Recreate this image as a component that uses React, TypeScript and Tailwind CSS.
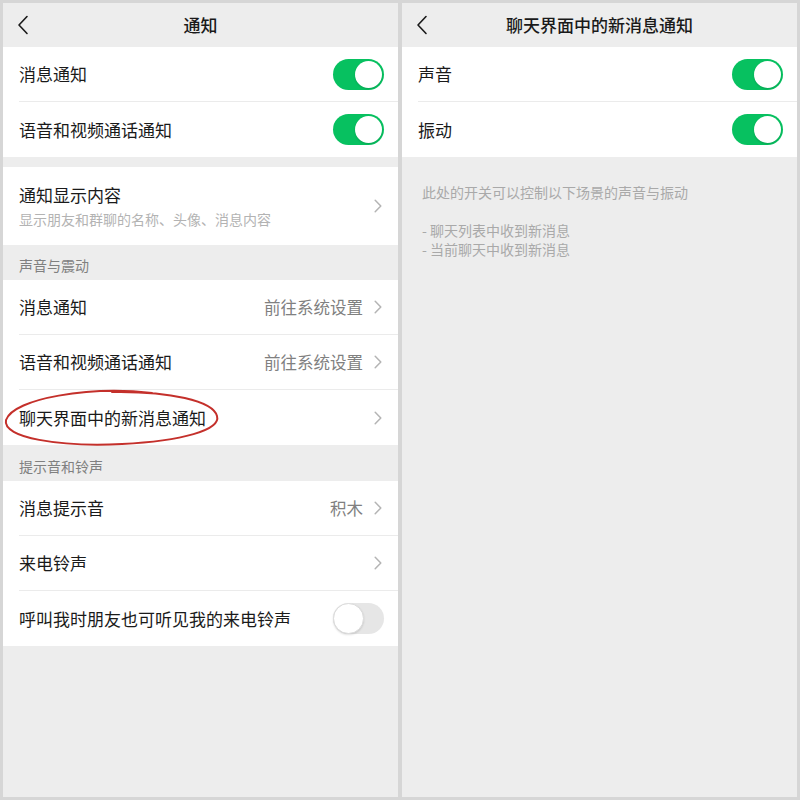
import React from "react";

const font = {
  fontFamily: '"Noto Sans CJK SC", "Noto Sans", "Liberation Sans", sans-serif',
};

const Chevron = () => (
  <svg width="8" height="14" viewBox="0 0 8 14" className="shrink-0">
    <path d="M1.2 1.2L6.8 7l-5.6 5.8" fill="none" stroke="#b4b4b4" strokeWidth="1.5" strokeLinecap="round" strokeLinejoin="round" />
  </svg>
);

const Toggle = ({ on = true }) =>
  on ? (
    <div className="w-[51px] h-[31px] rounded-full bg-[#07c160] flex items-center justify-end p-[2px] shrink-0">
      <div className="w-[27px] h-[27px] rounded-full bg-white shadow-[0_1px_2px_rgba(0,0,0,0.15)]" />
    </div>
  ) : (
    <div className="w-[51px] h-[31px] rounded-full bg-[#e6e6e6] flex items-center justify-start shrink-0">
      <div className="w-[31px] h-[31px] rounded-full bg-white border border-[#dcdcdc] shadow-[0_1px_2px_rgba(0,0,0,0.12)]" />
    </div>
  );

const Header = ({ title = "" }) => (
  <div className="h-[44px] bg-[#ededed] relative flex items-center justify-center shrink-0">
    <svg width="12" height="20" viewBox="0 0 12 20" className="absolute left-[14px] top-[12px]">
      <path d="M10 1.5L2 10l8 8.5" fill="none" stroke="#1a1a1a" strokeWidth="1.6" strokeLinecap="round" strokeLinejoin="round" />
    </svg>
    <span className="text-[17px] font-medium text-[#1a1a1a]">{title}</span>
  </div>
);

const Row = ({
  label = "",
  value = "",
  toggle,
  chevron = false,
  last = false,
}: {
  label?: string;
  value?: string;
  toggle?: boolean;
  chevron?: boolean;
  last?: boolean;
}) => (
  <div className="h-[55px] bg-white pl-4 flex">
    <div
      className={
        (toggle !== undefined ? "pr-[14px] " : "pr-4 ") +
        (last
          ? "flex-1 flex items-center"
          : "flex-1 flex items-center border-b border-[#ebebeb]")
      }
    >
      <span className="text-[17px] text-[#1a1a1a] flex-1">{label}</span>
      {value && <span className="text-[16.5px] text-[#808080] mr-[11px]">{value}</span>}
      {toggle !== undefined && <Toggle on={toggle} />}
      {chevron && <Chevron />}
    </div>
  </div>
);

const SectionTitle = ({ text = "", h = "h-[35px]" }) => (
  <div className={h + " flex items-end pl-4 pb-[6px]"}>
    <span className="text-[14px] leading-[18px] text-[#808080]">{text}</span>
  </div>
);

function App() {
  return (
    <div className="w-[800px] h-[800px] bg-[#d6d6d6] p-[3px] flex gap-[4px] relative" style={font}>
      <div className="flex-1 bg-[#ededed] flex flex-col">
        <Header title="通知" />
        <Row label="消息通知" toggle={true} />
        <Row label="语音和视频通话通知" toggle={true} last />
        <div className="h-[10px]" />
        <div className="h-[78px] bg-white pl-4 pr-4 flex items-center">
          <div className="flex-1 flex flex-col">
            <span className="text-[17px] leading-[24px] text-[#1a1a1a]">通知显示内容</span>
            <span className="text-[14px] leading-[20px] text-[#b3b3b3] mt-[2px]">
              显示朋友和群聊的名称、头像、消息内容
            </span>
          </div>
          <Chevron />
        </div>
        <SectionTitle text="声音与震动" />
        <Row label="消息通知" value="前往系统设置" chevron />
        <Row label="语音和视频通话通知" value="前往系统设置" chevron />
        <Row label="聊天界面中的新消息通知" chevron last />
        <SectionTitle text="提示音和铃声" h="h-[36px]" />
        <Row label="消息提示音" value="积木" chevron />
        <Row label="来电铃声" chevron />
        <Row label="呼叫我时朋友也可听见我的来电铃声" toggle={false} last />
      </div>

      <div className="flex-1 bg-[#ededed] flex flex-col">
        <Header title="聊天界面中的新消息通知" />
        <Row label="声音" toggle={true} />
        <Row label="振动" toggle={true} last />
        <div className="pt-[26px] pl-[20px] text-[14px] leading-[19px] text-[#a9a9a9]">
          <div>此处的开关可以控制以下场景的声音与振动</div>
          <div className="h-[19px]" />
          <div>- 聊天列表中收到新消息</div>
          <div>- 当前聊天中收到新消息</div>
        </div>
      </div>

      <svg
        className="absolute inset-0 pointer-events-none"
        width="800"
        height="800"
        viewBox="0 0 800 800"
      >
        <path
          d="M152 393 C 90 386 14 398 6 420 C 2 438 60 447 122 444 C 182 441 221 430 217 416 C 213 401 170 391 112 392"
          fill="none"
          stroke="#c4302b"
          strokeWidth="2"
          strokeLinecap="round"
        />
      </svg>
    </div>
  );
}

export default App;
